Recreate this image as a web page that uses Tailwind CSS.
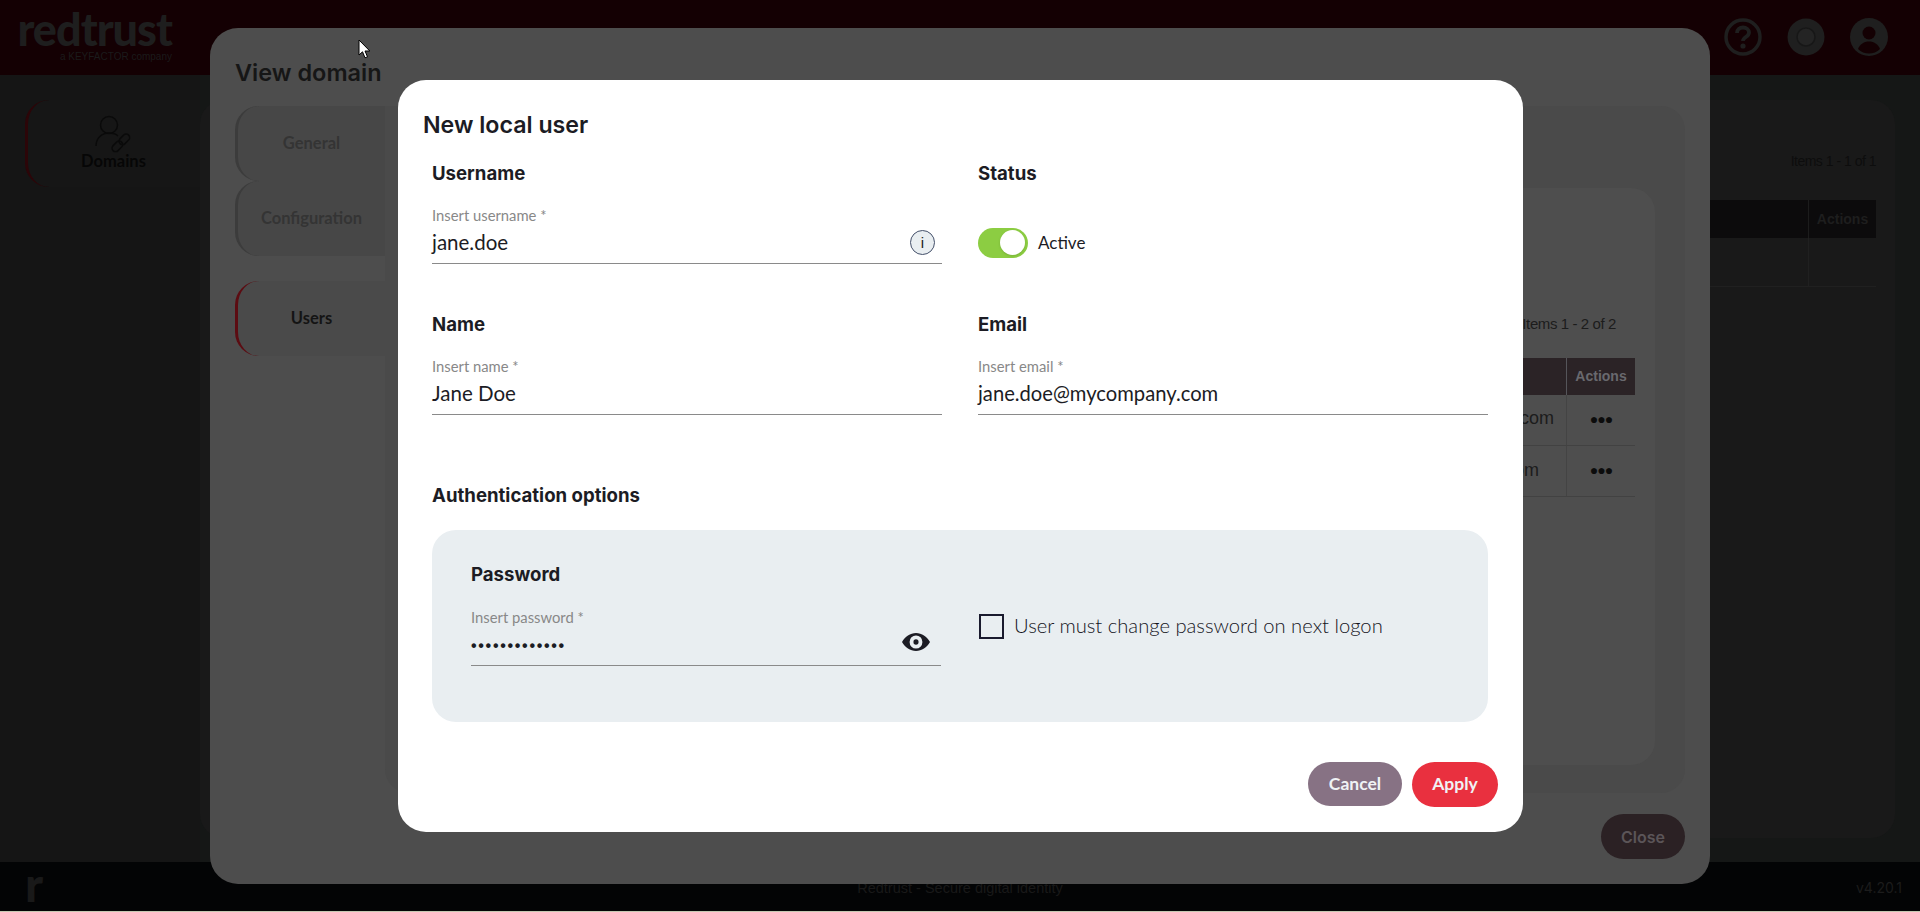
<!DOCTYPE html>
<html lang="en">
<head>
<meta charset="utf-8">
<title>New local user</title>
<script src="https://cdn.jsdelivr.net/npm/@tailwindcss/browser@4"></script>
</head>
<body class="m-0 bg-[#030405]">
<div class="relative w-[1920px] h-[912px] overflow-hidden font-['Lato','Liberation_Sans',sans-serif] text-[#1c1c24]">

  <!-- Page behind the dialogs (dimmed) -->
  <header class="h-[75px] bg-[#140003] flex items-start pl-[20px] pr-[32px]">
    <div class="flex flex-col items-end w-[152px]">
      <span class="font-black text-[45px] leading-[40px] mt-[9px] tracking-[-1px] text-[#1e1e1e]">redtrust</span>
      <span class="text-[10px] leading-[14px] mt-[1px] text-[#1b1b1b] font-['Liberation_Sans',sans-serif]">a KEYFACTOR company</span>
    </div>
    <div class="ml-auto flex items-center gap-[25px] mt-[18px]">
      <svg class="w-[38px] h-[38px]" viewBox="0 0 38 38" fill="none"><circle cx="19" cy="19" r="17" stroke="#1f1f1f" stroke-width="3.5"/><path d="M13 15c0-3.5 2.7-5.5 6-5.5s6 2 6 5c0 4.5-6 4.500-6 8.500" stroke="#1f1f1f" stroke-width="3.800"/><circle cx="19" cy="28" r="2.600" fill="#1f1f1f"/></svg>
      <svg class="w-[38px] h-[38px]" viewBox="0 0 38 38"><circle cx="19" cy="19" r="18.500" fill="#1f1f1f"/><circle cx="19" cy="19" r="9" fill="#242424" stroke="#171717" stroke-width="1.500"/></svg>
      <svg class="w-[38px] h-[38px]" viewBox="0 0 38 38"><circle cx="19" cy="19" r="19" fill="#1f1f1f"/><circle cx="19" cy="15" r="6.500" fill="#140003"/><path d="M8 31c2-5 6-7.500 11-7.500s9 2.500 11 7.500c-3 3-7 4.500-11 4.500s-8-1.500-11-4.500z" fill="#140003"/></svg>
    </div>
  </header>

  <main class="h-[787px] flex bg-[#151716]">
    <aside class="w-[200px] shrink-0 bg-[#151515] pl-[25px] pt-[25px]">
      <div class="h-[87px] rounded-l-[24px] border-l-[3px] border-[#2c0508] flex flex-col items-center pr-[1px] bg-[#161616]">
        <svg class="w-[40px] h-[38px] mt-[15px] shrink-0" viewBox="0 0 40 38" fill="none" stroke="#0a0a0a" stroke-width="1.500"><circle cx="15" cy="10" r="8.500"/><path d="M2 31c0-8 6-13 13-13 4 0 7 1 9 3"/><rect x="17" y="28" width="12" height="7" rx="3.500" transform="rotate(-45 23 31)"/><rect x="24" y="21" width="12" height="7" rx="3.500" transform="rotate(-45 30 24)"/></svg>
        <span class="font-bold text-[16.500px] leading-[20px] -mt-[2px] text-[#060606]">Domains</span>
      </div>
    </aside>
    <section class="w-[1695px] h-[738px] mt-[25px] rounded-[24px] bg-[#191919] pr-[19px] pl-[100px] pt-[50px] font-['Liberation_Sans',sans-serif]">
      <p class="text-right text-[14px] tracking-[-0.500px] leading-[22px] text-[#0d0d0d]">Items 1 - 1 of 1</p>
      <div class="mt-[28px] h-[38px] bg-[#0c0b0c] flex justify-end">
        <div class="w-[68px] border-l border-[#1c1c1c] flex items-center justify-center text-[14px] font-bold text-[#1e1e1e]">Actions</div>
      </div>
      <div class="h-[49px] border-b border-[#202020] flex justify-end">
        <div class="w-[68px] border-l border-[#202020]"></div>
      </div>
    </section>
  </main>

  <footer class="h-[49px] bg-[#030405] flex items-center justify-between pl-[25px] pr-[18px] relative">
    <span class="font-black text-[48px] leading-[44px] pb-[5px] text-[#191919]">r</span>
    <span class="absolute left-0 right-0 text-center top-[17px] text-[14.500px] leading-[18px] text-[#191919] font-['Liberation_Sans',sans-serif]">Redtrust - Secure digital identity</span>
    <span class="text-[14px] text-[#1c1c1c] font-['Inter',sans-serif] pt-[2px]">v4.20.1</span>
  </footer>
  <div class="h-px bg-[#c6c8b2]"></div>

  <!-- View domain dialog -->
  <div class="absolute left-[210px] top-[28px] w-[1500px] h-[856px] rounded-[28px] bg-[#4d4d4d] flex flex-col">
    <h2 class="ml-[25px] mt-[30px] h-[29px] text-[23.500px] leading-[30px] font-semibold font-['Inter',sans-serif] text-[#161616]">View domain</h2>
    <div class="flex mt-[19px] h-[687px] ml-[25px]">
      <nav class="w-[150px] shrink-0 flex flex-col text-[#343434] font-bold text-[16.500px]">
        <div class="h-[75px] rounded-l-[24px] border-l-[3px] border-[#3c3c3c] bg-[#474747] flex items-center justify-center pb-[1px]">General</div>
        <div class="h-[75px] rounded-l-[24px] border-l-[3px] border-[#3c3c3c] bg-[#474747] flex items-center justify-center pb-[1px]">Configuration</div>
        <div class="h-[75px] mt-[25px] rounded-l-[24px] border-l-[3px] border-[#5c0c12] bg-[#4a4a4a] flex items-center justify-center pb-[1px] text-[#141414]">Users</div>
      </nav>
      <div class="w-[1300px] rounded-r-[24px] rounded-bl-[24px] bg-[#4a4a4a] pt-[82px] pb-[28px] pl-[60px] pr-[30px] flex">
        <div class="flex-1 rounded-[24px] bg-[#4e4e4e] pl-[30px] pr-[20px] pt-[125px] font-['Liberation_Sans',sans-serif]">
          <p class="text-right text-[15px] tracking-[-0.400px] leading-[22px] pr-[19px] text-[#1c1c1c]">Items 1 - 2 of 2</p>
          <div class="mt-[23px] h-[37px] bg-[#2b2326] flex justify-end">
            <div class="w-[69px] border-l border-[#55555a] flex items-center justify-center text-[14px] font-bold text-[#69696e]">Actions</div>
          </div>
          <div class="h-[51px] border-b border-[#424242] flex items-center justify-end text-[18px] text-[#1c1c1c]">
            <span class="pr-[12px] pb-[3px]">jane.doe@mycompany.com</span>
            <div class="w-[69px] h-full border-l border-[#444444] flex items-center justify-center text-[#0c0c0c] tracking-[-1px] text-[14px] pb-[1px]">●●●</div>
          </div>
          <div class="h-[51px] border-b border-[#424242] flex items-center justify-end text-[18px] text-[#1c1c1c]">
            <span class="pr-[27px] pb-[2px]">john.doe@mycompany.com</span>
            <div class="w-[69px] h-full border-l border-[#444444] flex items-center justify-center text-[#0c0c0c] tracking-[-1px] text-[14px] pb-[1px]">●●●</div>
          </div>
        </div>
      </div>
    </div>
    <div class="flex justify-end mt-[21px] pr-[25px]">
      <div class="w-[84px] h-[45px] rounded-full bg-[#2b2124] text-[#5b5558] font-['Inter',sans-serif] font-semibold text-[16px] flex items-center justify-center">Close</div>
    </div>
  </div>

  <!-- New local user dialog -->
  <div class="absolute left-[398px] top-[80px] w-[1125px] h-[752px] rounded-[28px] bg-white pt-[25px] px-[34px]">
    <h3 class="-ml-[9px] h-[40px] leading-[40px] text-[23.200px] font-semibold font-['Inter',sans-serif] text-[#1c1c24]">New local user</h3>

    <div class="grid grid-cols-[510px_510px] gap-x-[36px] gap-y-[48px] mt-[16px]">
      <div>
        <h4 class="h-[24px] leading-[24px] text-[18.600px] font-bold font-['Inter',sans-serif]">Username</h4>
        <label class="block mt-[21px] h-[18px] leading-[18px] text-[14.800px] text-[#888888]">Insert username *</label>
        <div class="h-[40px] border-b border-[#8a8a8a] flex items-center justify-between pr-[7px] text-[20.500px]">
          <span class="pb-[3px]">jane.doe</span>
          <span class="w-[25px] h-[25px] mb-[3px] rounded-full border border-[#44506a] bg-[#e9eef1] flex items-center justify-center text-[15px] leading-none font-['Liberation_Sans',sans-serif]">i</span>
        </div>
      </div>
      <div>
        <h4 class="h-[24px] leading-[24px] text-[18.600px] font-bold font-['Inter',sans-serif]">Status</h4>
        <div class="mt-[39px] h-[40px] flex items-center gap-[10px]">
          <span class="w-[50px] h-[30px] mb-[3px] rounded-full bg-[#8ccd42] flex items-center justify-end pr-[3px]">
            <span class="w-[25px] h-[25px] rounded-full bg-white shadow-sm"></span>
          </span>
          <span class="text-[17px] pb-[3px]">Active</span>
        </div>
      </div>
      <div>
        <h4 class="h-[24px] leading-[24px] text-[18.600px] font-bold font-['Inter',sans-serif]">Name</h4>
        <label class="block mt-[21px] h-[18px] leading-[18px] text-[14.800px] text-[#888888]">Insert name *</label>
        <div class="h-[40px] border-b border-[#8a8a8a] flex items-center text-[20.500px]"><span class="pb-[3px]">Jane Doe</span></div>
      </div>
      <div>
        <h4 class="h-[24px] leading-[24px] text-[18.600px] font-bold font-['Inter',sans-serif]">Email</h4>
        <label class="block mt-[21px] h-[18px] leading-[18px] text-[14.800px] text-[#888888]">Insert email *</label>
        <div class="h-[40px] border-b border-[#8a8a8a] flex items-center text-[20.200px]"><span class="pb-[3px]">jane.doe@mycompany.com</span></div>
      </div>
    </div>

    <h4 class="mt-[68px] h-[24px] leading-[24px] text-[18.600px] font-bold font-['Inter',sans-serif]">Authentication options</h4>
    <div class="mt-[23px] h-[192px] w-[1056px] rounded-[24px] bg-[#e9eef1] pl-[39px] pt-[32px] flex">
      <div class="w-[470px] shrink-0">
        <h4 class="h-[24px] leading-[25px] text-[18.600px] font-bold font-['Inter',sans-serif]">Password</h4>
        <label class="block mt-[22px] h-[18px] leading-[18px] text-[14.800px] text-[#888888]">Insert password *</label>
        <div class="h-[40px] border-b border-[#8a8a8a] flex items-center justify-between pr-[11px]">
          <span class="text-[16px] tracking-[1.700px] pt-[1px] font-['Liberation_Sans',sans-serif] font-bold">•••••••••••••</span>
          <svg class="w-[28px] h-[24px] -mt-[7px]" viewBox="0 0 24 20" fill="#1c1c24" preserveAspectRatio="none"><path fill-rule="evenodd" d="M12 2.500C7 2.500 2.700 5.600 0 10c2.700 4.400 7 7.500 12 7.500s9.300-3.100 12-7.500c-2.700-4.400-7-7.500-12-7.500zM12 15.500a5.500 5.500 0 1 1 0-11 5.500 5.500 0 0 1 0 11z"/><circle cx="12" cy="10" r="2.200"/></svg>
        </div>
      </div>
      <div class="ml-[38px] mt-[52px] h-[25px] flex items-center gap-[10px]">
        <span class="w-[25px] h-[25px] border-2 border-[#1a1a2e] bg-[#e9eef1]"></span>
        <span class="text-[20.200px] font-light pb-[2px] text-[#14141c]">User must change password on next logon</span>
      </div>
    </div>

    <div class="mt-[40px] -mr-[9px] flex justify-end items-start gap-[10px] font-bold text-[17.500px] text-[#f0f2f5]">
      <button class="w-[94px] h-[44px] rounded-full bg-[#877284]">Cancel</button>
      <button class="w-[86px] h-[45px] rounded-full bg-[#e9303f]">Apply</button>
    </div>
  </div>

  <!-- Mouse pointer -->
  <svg class="absolute left-[358px] top-[39px] w-[13px] h-[20px]" viewBox="0 0 13 20"><path d="M1 1v15l3.500-3.200 2.500 6 2.500-1-2.500-5.800h4.800z" fill="#ffffff" stroke="#000000" stroke-width="1"/></svg>
</div>
</body>
</html>
